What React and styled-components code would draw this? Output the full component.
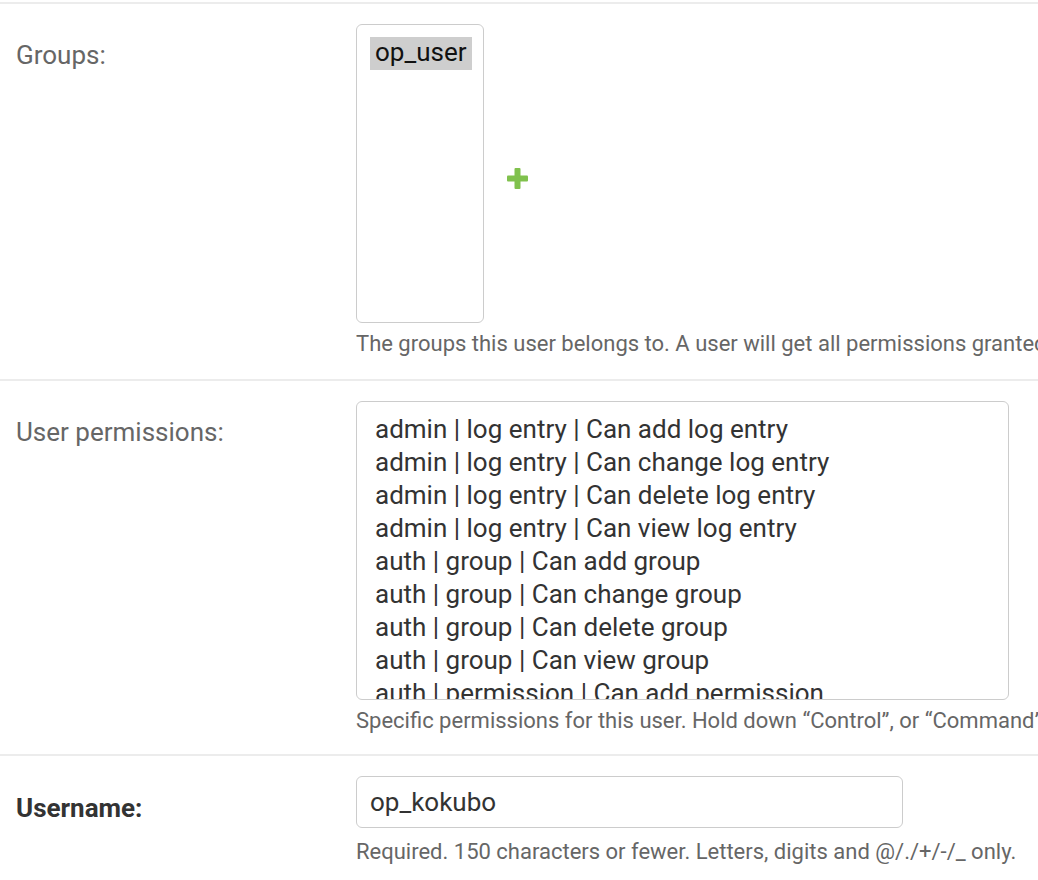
import styled, { createGlobalStyle } from "styled-components";

const GlobalStyle = createGlobalStyle`
  html, body {
    margin: 0;
    padding: 0;
    background: #fff;
    overflow: hidden;
  }
  body {
    font-family: Roboto, "Liberation Sans", sans-serif;
    color: #333;
  }
`;

const groups = [{ name: "op_user", selected: true }];

const permissions = [
  "admin | log entry | Can add log entry",
  "admin | log entry | Can change log entry",
  "admin | log entry | Can delete log entry",
  "admin | log entry | Can view log entry",
  "auth | group | Can add group",
  "auth | group | Can change group",
  "auth | group | Can delete group",
  "auth | group | Can view group",
  "auth | permission | Can add permission",
  "auth | permission | Can change permission",
];

const PlusIcon = () => (
  <svg width="21" height="21" viewBox="0 0 21 21" aria-hidden="true">
    <rect x="7.5" y="0" width="6" height="21" rx="1" fill="#80c14d" />
    <rect x="0" y="7.5" width="21" height="6" rx="1" fill="#80c14d" />
  </svg>
);

export default function App() {
  return (
    <>
      <GlobalStyle />
      <Fieldset>
        <Row>
          <Label>Groups:</Label>
          <Field>
            <SelectRow>
              <ListBox role="listbox" $width={128}>
                {groups.map((g) => (
                  <Option key={g.name} $selected={g.selected}>
                    {g.name}
                  </Option>
                ))}
              </ListBox>
              <AddLink href="#">
                <PlusIcon />
              </AddLink>
            </SelectRow>
            <Help>
              The groups this user belongs to. A user will get all permissions granted to each of their groups.
            </Help>
          </Field>
        </Row>

        <Row $bottom={20}>
          <Label>User permissions:</Label>
          <Field>
            <ListBox role="listbox" $width={653}>
              {permissions.map((p) => (
                <Option key={p}>{p}</Option>
              ))}
            </ListBox>
            <Help>
              Specific permissions for this user. Hold down “Control”, or “Command” on a Mac, to select more than one.
            </Help>
          </Field>
        </Row>

        <Row>
          <Label $required>Username:</Label>
          <Field>
            <TextInput type="text" defaultValue="op_kokubo" />
            <Help $gap={11}>Required. 150 characters or fewer. Letters, digits and @/./+/-/_ only.</Help>
          </Field>
        </Row>
      </Fieldset>
    </>
  );
}

const Fieldset = styled.div`
  margin-top: 2px;
  border-top: 2px solid #ececec;
  width: 1038px;
`;

const Row = styled.div`
  display: flex;
  align-items: flex-start;
  padding: 20px 0 ${(p) => p.$bottom || 22}px;
  border-bottom: 2px solid #ececec;
`;

const Label = styled.label`
  flex: 0 0 356px;
  padding-left: 16px;
  box-sizing: border-box;
  padding-top: ${(p) => (p.$required ? "18px" : "17px")};
  font-size: 26px;
  line-height: 28px;
  color: ${(p) => (p.$required ? "#333" : "#666")};
  font-weight: ${(p) => (p.$required ? 700 : 400)};
`;

const Field = styled.div`
  flex: 1;
  display: flex;
  flex-direction: column;
  min-width: 0;
  overflow: hidden;
`;

const SelectRow = styled.div`
  display: flex;
  align-items: center;
  gap: 23px;
`;

const ListBox = styled.div`
  width: ${(p) => p.$width}px;
  height: 299px;
  box-sizing: border-box;
  border: 1px solid #ccc;
  border-radius: 6px;
  padding: 12px 13px;
  overflow: hidden;
  background: #fff;
`;

const Option = styled.div`
  display: ${(p) => (p.$selected ? "inline-block" : "block")};
  box-sizing: border-box;
  padding: 0 5px 3px;
  height: 33px;
  line-height: 30px;
  font-size: 26px;
  white-space: nowrap;
  color: ${(p) => (p.$selected ? "#111" : "#333")};
  background: ${(p) => (p.$selected ? "#cecece" : "transparent")};
`;

const AddLink = styled.a`
  display: flex;
  margin-top: 10px;
`;

const Help = styled.div`
  margin-top: ${(p) => p.$gap || 8}px;
  font-size: 22px;
  line-height: 26px;
  color: #666;
  white-space: nowrap;
`;

const TextInput = styled.input`
  width: 547px;
  height: 52px;
  box-sizing: border-box;
  border: 1px solid #ccc;
  border-radius: 6px;
  padding: 0 13px;
  font-family: Roboto, "Liberation Sans", sans-serif;
  font-size: 26px;
  color: #333;
  outline: none;
`;
